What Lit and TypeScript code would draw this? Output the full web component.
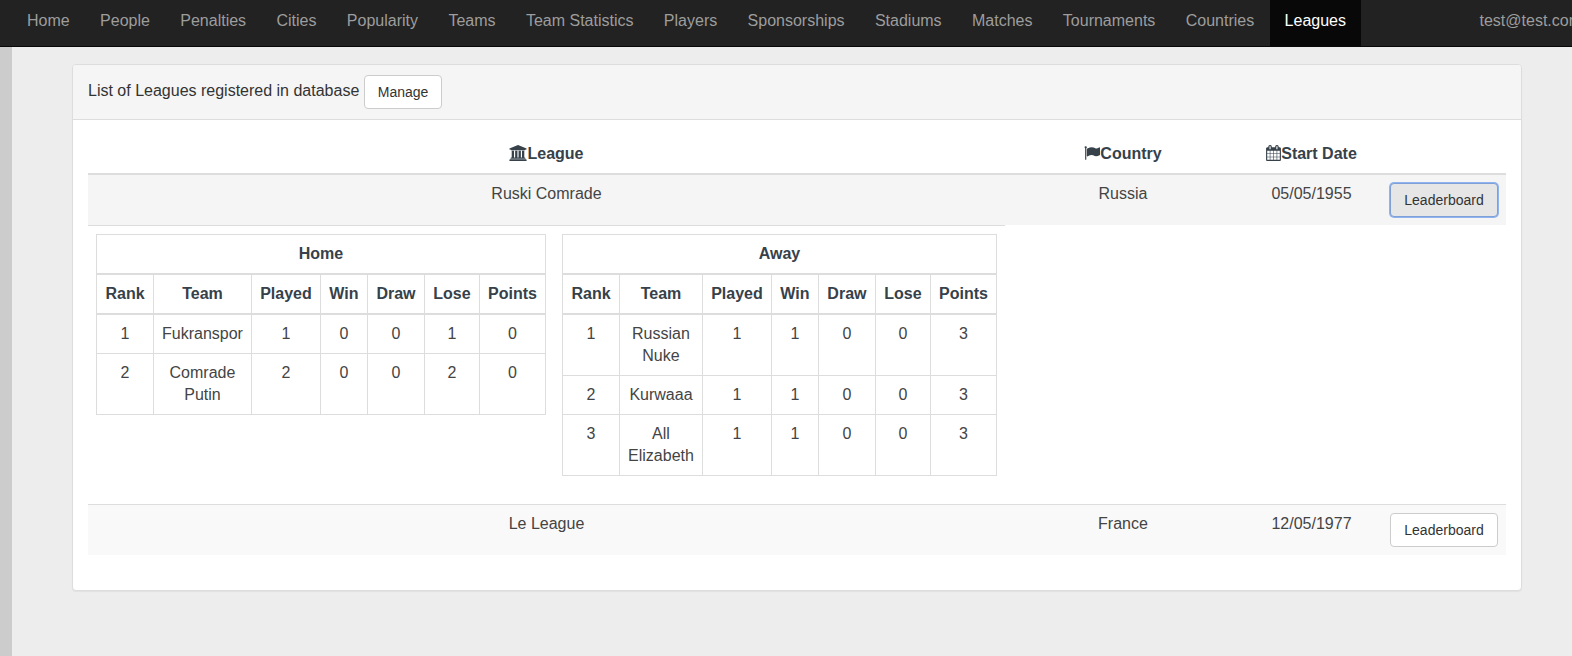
import { LitElement, html, css, svg } from "lit";
import { customElement, property, state } from "lit/decorators.js";
import { classMap } from "lit/directives/class-map.js";

interface Standing {
  team: string;
  played: number;
  win: number;
  draw: number;
  lose: number;
  points: number;
}

interface League {
  name: string;
  country: string;
  start: string;
  home: Standing[];
  away: Standing[];
}

const NAV = [
  "Home", "People", "Penalties", "Cities", "Popularity", "Teams",
  "Team Statistics", "Players", "Sponsorships", "Stadiums", "Matches",
  "Tournaments", "Countries", "Leagues",
];

const LEAGUES: League[] = [
  {
    name: "Ruski Comrade",
    country: "Russia",
    start: "05/05/1955",
    home: [
      { team: "Fukranspor", played: 1, win: 0, draw: 0, lose: 1, points: 0 },
      { team: "Comrade Putin", played: 2, win: 0, draw: 0, lose: 2, points: 0 },
    ],
    away: [
      { team: "Russian Nuke", played: 1, win: 1, draw: 0, lose: 0, points: 3 },
      { team: "Kurwaaa", played: 1, win: 1, draw: 0, lose: 0, points: 3 },
      { team: "All Elizabeth", played: 1, win: 1, draw: 0, lose: 0, points: 3 },
    ],
  },
  { name: "Le League", country: "France", start: "12/05/1977", home: [], away: [] },
];

const bankIcon = html`<svg class="icon" width="18" height="16" viewBox="0 0 1920 1792" aria-hidden="true">${svg`<path d="M960 0l960 384v128h-128q0 26-20.5 45t-48.5 19h-1526q-28 0-48.5-19t-20.5-45h-128v-128zm-704 640h256v768h128v-768h256v768h128v-768h256v768h128v-768h256v768h59q28 0 48.5 19t20.5 45v64h-1664v-64q0-26 20.5-45t48.5-19h59v-768zm1595 960q28 0 48.5 19t20.5 45v128h-1920v-128q0-26 20.5-45t48.5-19h1782z"/>`}</svg>`;

const flagIcon = html`<svg class="icon" width="16" height="16" viewBox="0 0 1792 1792" aria-hidden="true">${svg`<path d="M320 256q0 72-64 110v1266q0 13-9.5 22.5t-22.5 9.5h-64q-13 0-22.5-9.5t-9.5-22.5v-1266q-64-38-64-110 0-53 37.5-90.5t90.5-37.5 90.5 37.5 37.5 90.5zm1472 64v763q0 25-12.5 38.5t-39.5 27.5q-215 116-369 116-61 0-123.5-22t-108.5-48-115.5-48-142.5-22q-192 0-464 146-17 9-33 9-26 0-45-19t-19-45v-742q0-32 31-55 21-14 79-43 236-120 421-120 107 0 200 29t219 88q38 19 88 19 54 0 117.5-21t110-47 88-47 54.5-21q26 0 45 19t19 45z"/>`}</svg>`;

const calendarIcon = html`<svg class="icon" width="15" height="16" viewBox="64 0 1664 1792" aria-hidden="true">${svg`<path d="M192 1664h288v-288h-288v288zm352 0h320v-288h-320v288zm-352-352h288v-320h-288v320zm352 0h320v-320h-320v320zm-352-384h288v-288h-288v288zm736 736h320v-288h-320v288zm-384-736h320v-288h-320v288zm768 736h288v-288h-288v288zm-384-352h320v-320h-320v320zm-352-864v-288q0-13-9.5-22.5t-22.5-9.5h-64q-13 0-22.5 9.5t-9.5 22.5v288q0 13 9.5 22.5t22.5 9.5h64q13 0 22.5-9.5t9.5-22.5zm736 864h288v-320h-288v320zm-384-384h320v-288h-320v288zm384 0h288v-288h-288v288zm32-480v-288q0-13-9.5-22.5t-22.5-9.5h-64q-13 0-22.5 9.5t-9.5 22.5v288q0 13 9.5 22.5t22.5 9.5h64q13 0 22.5-9.5t9.5-22.5zm384-64v1280q0 52-38 90t-90 38h-1408q-52 0-90-38t-38-90v-1280q0-52 38-90t90-38h128v-96q0-66 47-113t113-47h64q66 0 113 47t47 113v96h384v-96q0-66 47-113t113-47h64q66 0 113 47t47 113v96h128q52 0 90 38t38 90z"/>`}</svg>`;

@customElement("standings-table")
export class StandingsTable extends LitElement {
  @property() caption = "";
  @property({ attribute: false }) rows: Standing[] = [];

  static styles = css`
    :host {
      display: block;
    }
    .standings {
      width: 100%;
      table-layout: fixed;
      border-collapse: separate;
      border-spacing: 0;
      border-top: 1px solid #ddd;
      border-left: 1px solid #ddd;
    }
    .rank,
    .draw {
      width: 57px;
    }
    .played {
      width: 69px;
    }
    .win {
      width: 47px;
    }
    .lose {
      width: 55px;
    }
    .points {
      width: 66px;
    }
    .cell,
    .head {
      padding: 8px 0;
      border-right: 1px solid #ddd;
      border-bottom: 1px solid #ddd;
      text-align: center;
      vertical-align: top;
    }
    .cell {
      padding: 8px;
    }
    .head {
      border-bottom-width: 2px;
      color: #36414a;
      font-weight: bold;
    }
  `;

  render() {
    const heads = ["Rank", "Team", "Played", "Win", "Draw", "Lose", "Points"];
    return html`
      <table class="standings">
        <colgroup>${heads.map((h) => html`<col class=${h.toLowerCase()} />`)}</colgroup>
        <thead>
          <tr><th class="head" colspan="7" scope="colgroup">${this.caption}</th></tr>
          <tr>${heads.map((h) => html`<th class="head" scope="col">${h}</th>`)}</tr>
        </thead>
        <tbody>
          ${this.rows.map((r, i) => html`
            <tr>
              ${[i + 1, r.team, r.played, r.win, r.draw, r.lose, r.points].map(
                (v) => html`<td class="cell">${v}</td>`
              )}
            </tr>`)}
        </tbody>
      </table>
    `;
  }
}

@customElement("app-root")
export class AppRoot extends LitElement {
  @state() private open = 0;

  static styles = css`
    :host {
      display: flex;
      flex-direction: column;
      min-height: 100vh;
      overflow: hidden;
      font-family: "Liberation Sans", Arial, sans-serif;
      font-size: 16px;
      line-height: 22px;
      color: #444;
      background: #ededed;
    }
    .navbar {
      display: flex;
      padding-left: 12px;
      background: #222;
      border-bottom: 1px solid #080808;
    }
    .links {
      display: flex;
      margin: 0;
      padding: 0;
      list-style: none;
    }
    .sections {
      flex: 0 0 1349px;
      justify-content: space-between;
    }
    .account {
      margin-left: auto;
      margin-right: -25px;
    }
    .link {
      display: block;
      padding: 10px 15px 14px;
      color: #9d9d9d;
      text-decoration: none;
      white-space: nowrap;
    }
    .link.active {
      color: #fff;
      background: #080808;
    }
    .page {
      flex: 1;
      padding: 17px 50px 60px 60px;
      border-left: 12px solid #ccc;
    }
    .panel {
      background: #fff;
      border: 1px solid #ddd;
      border-radius: 4px;
      box-shadow: 0 1px 1px rgba(0, 0, 0, 0.05);
    }
    .heading {
      padding: 10px 15px;
      color: #333;
      background: #f5f5f5;
      border-bottom: 1px solid #ddd;
      border-radius: 3px 3px 0 0;
    }
    .body {
      padding: 15px 15px 35px;
    }
    .btn {
      box-sizing: border-box;
      padding: 6px 13px;
      font-family: inherit;
      font-size: 14px;
      line-height: 20px;
      color: #333;
      background: #fff;
      border: 1px solid #ccc;
      border-radius: 4px;
      vertical-align: middle;
      cursor: pointer;
    }
    .btn.pressed {
      background: #e6e6e6;
      border-color: #7f9fd6;
      box-shadow: 0 0 0 1px #8db4f0;
    }
    .leagues {
      width: 100%;
      table-layout: fixed;
      border-collapse: separate;
      border-spacing: 0;
    }
    .col-country {
      width: 236px;
    }
    .col-date {
      width: 141px;
    }
    .col-action {
      width: 124px;
    }
    .head,
    .cell {
      padding: 8px;
      text-align: center;
      vertical-align: top;
    }
    .head {
      color: #36414a;
      font-weight: bold;
      border-bottom: 2px solid #ddd;
    }
    .cell.action {
      padding: 8px 0;
      line-height: 0;
    }
    .row .cell {
      background: #f9f9f9;
    }
    .row.hovered .cell {
      background: #f5f5f5;
    }
    .detail .cell,
    .row + .row .cell,
    .detail + .row .cell {
      border-top: 1px solid #ddd;
    }
    .boards {
      display: grid;
      grid-template-columns: 450px 435px;
      align-items: start;
      gap: 16px;
      padding-bottom: 20px;
    }
    .icon {
      vertical-align: -2px;
      fill: currentColor;
    }
  `;

  private toggle(i: number) {
    this.open = this.open === i ? -1 : i;
  }

  render() {
    return html`
      <nav class="navbar">
        <ul class="links sections">
          ${NAV.map((n) => html`<li><a href="#" class=${classMap({ link: true, active: n === "Leagues" })}>${n}</a></li>`)}
        </ul>
        <ul class="links account">
          <li><a href="#" class="link">test@test.com</a></li>
        </ul>
      </nav>
      <main class="page">
        <section class="panel">
          <div class="heading">List of Leagues registered in database <button type="button" class="btn">Manage</button></div>
          <div class="body">
            <table class="leagues">
              <colgroup>
                <col />
                <col class="col-country" />
                <col class="col-date" />
                <col class="col-action" />
              </colgroup>
              <thead>
                <tr>
                  <th class="head" scope="col">${bankIcon}League</th>
                  <th class="head" scope="col">${flagIcon}Country</th>
                  <th class="head" scope="col">${calendarIcon}Start Date</th>
                  <th class="head"></th>
                </tr>
              </thead>
              <tbody>
                ${LEAGUES.map((l, i) => this.renderLeague(l, i))}
              </tbody>
            </table>
          </div>
        </section>
      </main>
    `;
  }

  private renderLeague(l: League, i: number) {
    const open = this.open === i;
    return html`
      <tr class=${classMap({ row: true, hovered: open })}>
        <td class="cell">${l.name}</td>
        <td class="cell">${l.country}</td>
        <td class="cell">${l.start}</td>
        <td class="cell action">
          <button type="button" class=${classMap({ btn: true, pressed: open })} aria-expanded=${open ? "true" : "false"}
            @click=${() => this.toggle(i)}>Leaderboard</button>
        </td>
      </tr>
      ${open ? html`
        <tr class="detail">
          <td class="cell">
            <div class="boards">
              <standings-table caption="Home" .rows=${l.home}></standings-table>
              <standings-table caption="Away" .rows=${l.away}></standings-table>
            </div>
          </td>
        </tr>` : null}
    `;
  }
}
